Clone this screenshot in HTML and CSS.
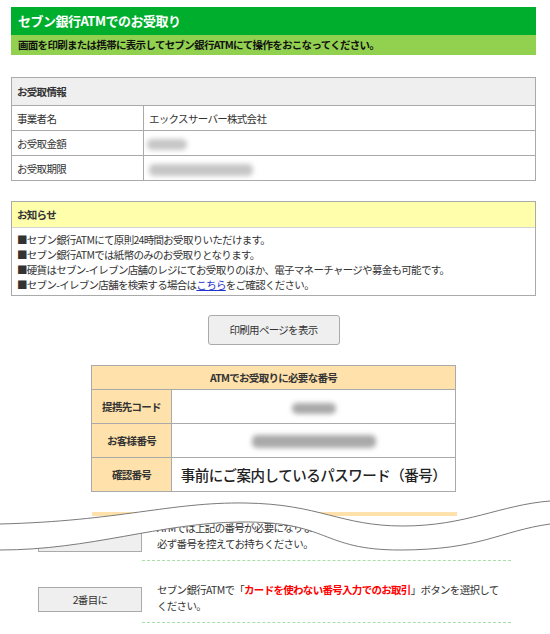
FILE: index.html
```html
<!DOCTYPE html>
<html lang="ja">
<head>
<meta charset="utf-8">
<title>セブン銀行ATMでのお受取り</title>
<link rel="stylesheet" href="styles.css">
</head>
<body>
<div class="page">
  <div class="title">セブン銀行ATMでのお受取り</div>
  <div class="subtitle">画面を印刷または携帯に表示してセブン銀行ATMにて操作をおこなってください。</div>

  <table class="info">
    <colgroup><col class="info-c1"><col></colgroup>
    <tr><th colspan="2">お受取情報</th></tr>
    <tr><td>事業者名</td><td>エックスサーバー株式会社</td></tr>
    <tr><td>お受取金額</td><td><span class="blur blur-amount"></span></td></tr>
    <tr><td>お受取期限</td><td><span class="blur blur-date"></span></td></tr>
  </table>

  <div class="notice">
    <div class="notice-head">お知らせ</div>
    <ul class="notice-list">
      <li>■セブン銀行ATMにて原則24時間お受取りいただけます。</li>
      <li>■セブン銀行ATMでは紙幣のみのお受取りとなります。</li>
      <li>■硬貨はセブン-イレブン店舗のレジにてお受取りのほか、電子マネーチャージや募金も可能です。</li>
      <li>■セブン-イレブン店舗を検索する場合は<a href="#" class="link">こちら</a>をご確認ください。</li>
    </ul>
  </div>

  <div class="btn-wrap"><div class="print-btn">印刷用ページを表示</div></div>

  <table class="atm">
    <colgroup><col class="atm-c1"><col></colgroup>
    <tr><th colspan="2" class="atm-head">ATMでお受取りに必要な番号</th></tr>
    <tr><th class="lbl">提携先コード</th><td class="val"><span class="blur blur-dark blur-code"></span></td></tr>
    <tr><th class="lbl">お客様番号</th><td class="val"><span class="blur blur-dark blur-cust"></span></td></tr>
    <tr><th class="lbl">確認番号</th><td class="val big">事前にご案内しているパスワード（番号）</td></tr>
  </table>

  <div class="cut">
    <div class="peach-bar"></div>
    <div class="step">
      <div class="step-btn step-btn1">1番目に</div>
      <div class="step-text">ATMでは上記の番号が必要になります。<br>必ず番号を控えてお持ちください。</div>
    </div>
    <div class="step step2">
      <div class="step-btn">2番目に</div>
      <div class="step-text">セブン銀行ATMで「<strong class="red">カードを使わない番号入力でのお取引</strong>」ボタンを選択して<br>ください。</div>
    </div>
    <svg class="wave" viewBox="0 493 550 70" width="550" height="70">
      <path class="wave-fill" d="M0,525 C120,522 170,503 245,504 C320,505 340,527 403,527 C466,527 500,506 550,502 L550,525 C500,532 480,551 400,551 C320,551 330,522 240,523 C160,524 90,551 0,551 Z"/>
      <path class="wave-line" d="M0,525 C120,522 170,503 245,504 C320,505 340,527 403,527 C466,527 500,506 550,502"/>
      <path class="wave-line" d="M0,551 C90,551 160,524 240,523 C330,522 320,551 400,551 C480,551 500,532 550,525"/>
    </svg>
  </div>
</div>
</body>
</html>
```

FILE: styles.css
```css
body {
  margin: 0;
  background: #fff;
  color: #333;
  font-family: "Noto Sans CJK JP", "Noto Sans", sans-serif;
}

.page {
  width: 525px;
  margin: 7px 0 0 11px;
  font-size: 10.5px;
  letter-spacing: -0.7px;
}

.title {
  background: #00ae2d;
  color: #fff;
  font-weight: bold;
  font-size: 13px;
  letter-spacing: -0.5px;
  height: 28px;
  line-height: 28px;
  padding-left: 7px;
}

.subtitle {
  background: #92d050;
  color: #111;
  font-weight: bold;
  height: 20px;
  line-height: 20px;
  padding-left: 7px;
}

/* info table */
.info {
  width: 100%;
  border-collapse: collapse;
  table-layout: fixed;
  margin-top: 22px;
}
.info-c1 { width: 132px; }
.info th,
.info td {
  border: 1px solid #aaa;
  text-align: left;
  font-weight: normal;
  padding: 0 0 0 5px;
  height: 24px;
}
.info th {
  background: #efefef;
  font-weight: bold;
  height: 27px;
}

.blur {
  display: inline-block;
  vertical-align: middle;
  background: #c6c6c6;
  border-radius: 5px;
  filter: blur(2.5px);
}
.blur-dark { background: #a9a9a9; }
.blur-amount { width: 40px; height: 11px; margin-left: -2px; }
.blur-date { width: 104px; height: 12px; }
.blur-code { width: 44px; height: 11px; }
.blur-cust { width: 124px; height: 13px; }

/* notice */
.notice {
  margin-top: 20px;
  border: 1px solid #aaa;
}
.notice-head {
  background: #ffffab;
  font-weight: bold;
  height: 25px;
  line-height: 25px;
  padding-left: 5px;
  border-bottom: 1px solid #d4d4d4;
}
.notice-list {
  list-style: none;
  margin: 0;
  padding: 4px 5px 3px 5px;
  line-height: 15px;
}
.link {
  color: #2233cc;
  text-decoration: underline;
}

/* print button */
.btn-wrap {
  display: flex;
  justify-content: center;
  margin-top: 19px;
}
.print-btn {
  box-sizing: border-box;
  width: 132px;
  height: 30px;
  line-height: 28px;
  text-align: center;
  background: #efefef;
  border: 1px solid #aaa;
  border-radius: 3px;
  color: #333;
}

/* ATM table */
.atm {
  width: 365px;
  margin: 20px auto 0;
  border-collapse: collapse;
  table-layout: fixed;
}
.atm-c1 { width: 80px; }
.atm th,
.atm td {
  border: 1px solid #aaa;
  padding: 0;
  height: 33px;
}
.atm .atm-head {
  background: #ffe2ab;
  font-weight: bold;
  text-align: center;
  height: 23px;
}
.atm .lbl {
  background: #ffe2ab;
  font-weight: bold;
  text-align: center;
}
.atm .val {
  text-align: center;
  background: #fff;
}
.atm .big {
  font-size: 14.5px;
  font-weight: 500;
  letter-spacing: -0.5px;
  color: #222;
}

/* cut section */
.cut {
  position: relative;
  padding-top: 20px;
}
.peach-bar {
  width: 365px;
  height: 4px;
  margin-left: 81px;
  background: #ffe2ab;
}
.step {
  display: flex;
  align-items: flex-start;
  margin: 4px 0 0 27px;
}
.step2 { margin-top: 21px; }
.step-btn {
  box-sizing: border-box;
  width: 104px;
  height: 25px;
  margin-top: 5px;
  line-height: 23px;
  text-align: center;
  background: #efefef;
  border: 1px solid #aaa;
  color: #333;
}
.step-btn1 {
  margin-top: 7px;
  line-height: 14px;
}
.step-text {
  width: 354px;
  padding: 0 0 8px 15px;
  line-height: 16px;
  border-bottom: 1px dashed #a6e0a6;
}
.red {
  color: #f00;
  font-weight: bold;
}

.wave {
  position: absolute;
  top: 0;
  left: -11px;
}
.wave-fill { fill: #fff; }
.wave-line {
  fill: none;
  stroke: #7a7a7a;
  stroke-width: 1;
}
```
